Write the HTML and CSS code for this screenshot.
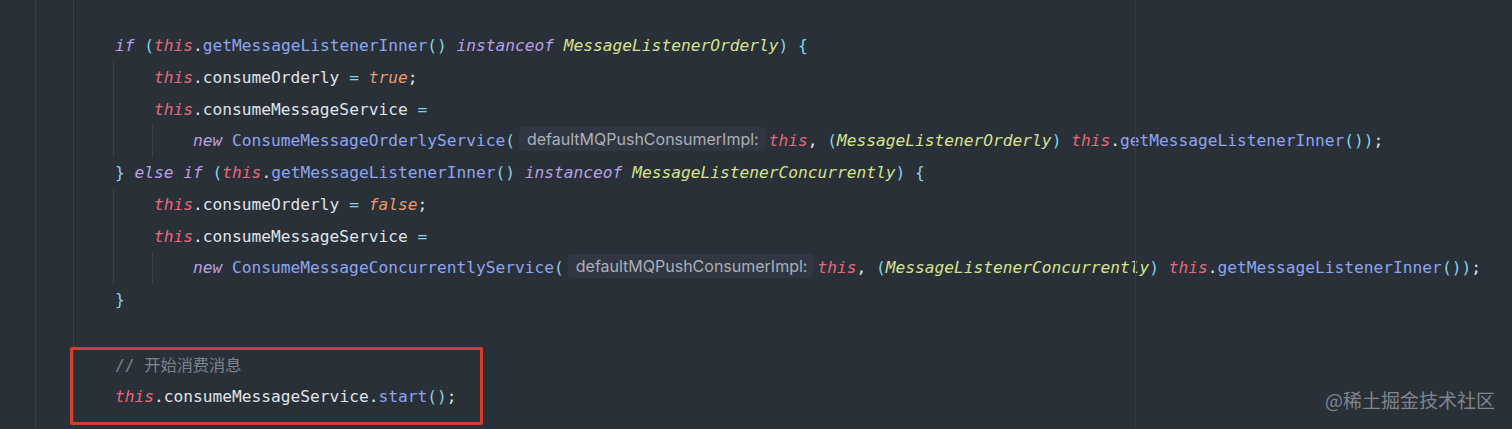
FILE: index.html
```html
<!doctype html>
<html lang="en">

<head>
  <meta charset="UTF-8">
  <title>DefaultMQPushConsumerImpl</title>
  <link rel="stylesheet" href="styles.css">
</head>

<body>
  <div class="editor">
    <div class="outer">
      <div class="inner">
        <div class="line"><span class="kw">if</span> <span class="p">(</span><span class="th">this</span>.<span class="fn">getMessageListenerInner</span><span class="p">()</span> <span class="kw">instanceof</span> <span class="ty">MessageListenerOrderly</span><span class="p">)</span> <span class="p">{</span></div>
        <div class="line"><span class="ind guide"></span><span class="th">this</span>.consumeOrderly <span class="op">=</span> <span class="lit">true</span>;</div>
        <div class="line"><span class="ind guide"></span><span class="th">this</span>.consumeMessageService <span class="op">=</span></div>
        <div class="line"><span class="ind guide"></span><span class="ind guide"></span><span class="kw">new</span> <span class="cls">ConsumeMessageOrderlyService</span><span class="p">(</span><span class="hint">defaultMQPushConsumerImpl:</span><span class="th">this</span>, <span class="p">(</span><span class="ty">MessageListenerOrderly</span><span class="p">)</span> <span class="th">this</span>.<span class="fn">getMessageListenerInner</span><span class="p">())</span>;</div>
        <div class="line"><span class="p">}</span> <span class="kw">else if</span> <span class="p">(</span><span class="th">this</span>.<span class="fn">getMessageListenerInner</span><span class="p">()</span> <span class="kw">instanceof</span> <span class="ty">MessageListenerConcurrently</span><span class="p">)</span> <span class="p">{</span></div>
        <div class="line"><span class="ind guide"></span><span class="th">this</span>.consumeOrderly <span class="op">=</span> <span class="lit">false</span>;</div>
        <div class="line"><span class="ind guide"></span><span class="th">this</span>.consumeMessageService <span class="op">=</span></div>
        <div class="line"><span class="ind guide"></span><span class="ind guide"></span><span class="kw">new</span> <span class="cls">ConsumeMessageConcurrentlyService</span><span class="p">(</span><span class="hint">defaultMQPushConsumerImpl:</span><span class="th">this</span>, <span class="p">(</span><span class="ty">MessageListenerConcurrently</span><span class="p">)</span> <span class="th">this</span>.<span class="fn">getMessageListenerInner</span><span class="p">())</span>;</div>
        <div class="line"><span class="p">}</span></div>
        <div class="line"></div>
        <div class="mark">
          <div class="line"><span class="cm">// 开始消费消息</span></div>
          <div class="line"><span class="th">this</span>.consumeMessageService.<span class="fn">start</span><span class="p">()</span>;</div>
        </div>
      </div>
    </div>
  </div>
  <div class="watermark">@稀土掘金技术社区</div>
</body>

</html>
```

FILE: styles.css
```css
html,
body {
  background-color: #2a3038;
  margin: 0;
  height: 100%;
  overflow: hidden;
}

.editor {
  position: relative;
  height: 100%;
  font-family: "DejaVu Sans Mono", "Liberation Mono", monospace;
  font-size: 16.22px;
  color: #dfe3ea;
}

/* right margin guide */
.editor::after {
  content: "";
  position: absolute;
  top: 0;
  bottom: 0;
  left: 1135px;
  width: 1px;
  background-color: #343a44;
}

.outer {
  margin-left: 35px;
  height: 100%;
  border-left: 1px solid #373d47;
}

.inner {
  box-sizing: border-box;
  margin-left: 37px;
  height: 100%;
  border-left: 1px solid #373d47;
  padding-top: 30px;
  padding-left: 41px;
}

.line {
  height: 31.75px;
  line-height: 31.75px;
  white-space: pre;
}

.ind {
  display: inline-block;
  width: 4ch;
  height: 31.75px;
  vertical-align: top;
}

.guide {
  box-shadow: inset 1px 0 0 #3a414b;
  margin-left: -2px;
  margin-right: 2px;
}

.kw {
  color: #b6a0e4;
  font-style: italic;
}

.th {
  color: #e8677c;
  font-style: italic;
}

.fn {
  color: #8ea4ef;
}

.cls {
  color: #8ea4ef;
}

.ty {
  color: #d4e28f;
  font-style: italic;
}

.lit {
  color: #e99a6e;
  font-style: italic;
}

.p,
.op {
  color: #85d3e8;
}

.cm {
  color: #7b838e;
  font-family: "DejaVu Sans Mono", "Noto Sans CJK SC", monospace;
}

.hint {
  display: inline-block;
  font-family: "Inter", "Liberation Sans", sans-serif;
  font-size: 16px;
  color: #a9afb8;
  background-color: #313742;
  border-radius: 4px;
  padding: 0 6px 0 8px;
  margin: 0 4px 0 4px;
  line-height: 24px;
  vertical-align: 1px;
}

/* red highlight box */
.mark {
  width: 413px;
  box-sizing: border-box;
  margin-left: -45px;
  margin-top: -1px;
  padding-left: 42px;
  padding-bottom: 9px;
  border: 3px solid #d2402c;
  border-radius: 2px;
}

.watermark {
  position: absolute;
  right: 17px;
  bottom: 16px;
  font-family: "Noto Sans CJK SC", sans-serif;
  font-size: 19px;
  color: #7f858d;
}
```
